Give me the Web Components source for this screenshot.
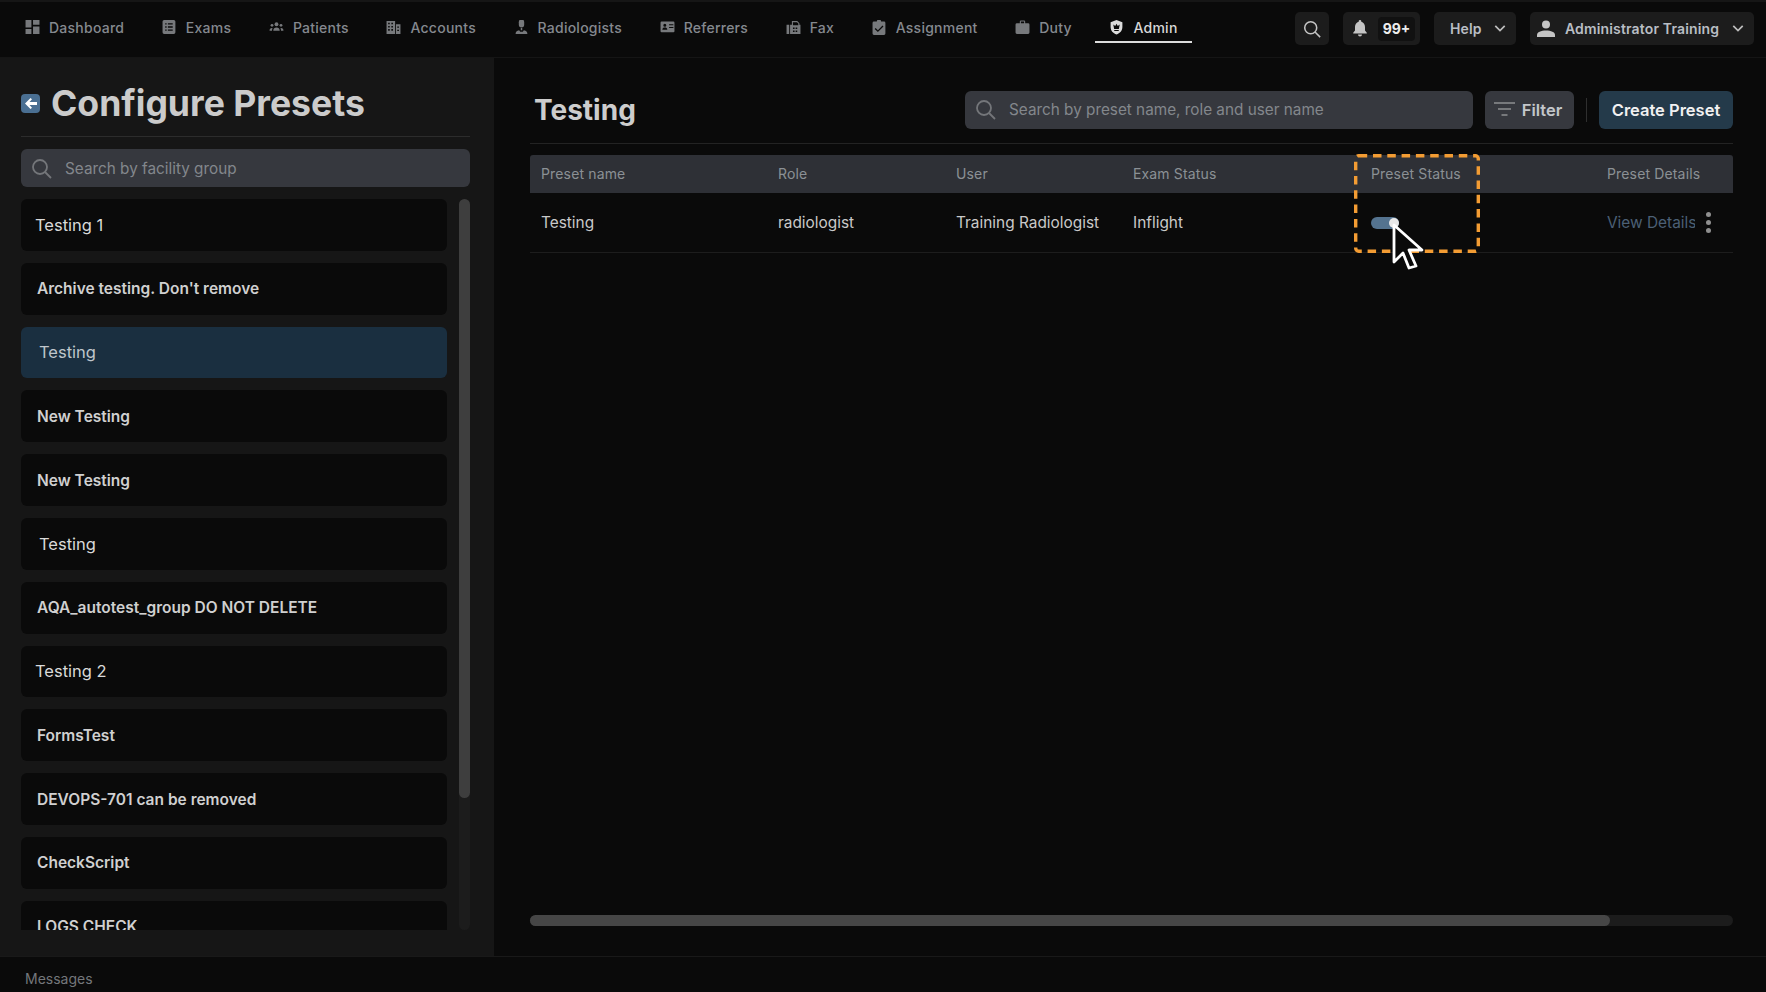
<!DOCTYPE html>
<html lang="en">
<head>
<meta charset="utf-8">
<title>Configure Presets</title>
<style>
  html, body { margin: 0; height: 100%; background: #0a0a0a; }
  body { font-family: Inter, "Liberation Sans", sans-serif; overflow: hidden; }
</style>
</head>
<body>
<app-shell></app-shell>
<script>
const ICONS = {
  dashboard: '<path d="M0 0h5.500v7H0zM7 0h6v4.500H7zM7 6h6v7H7zM0 8.500h5.500V13H0z"/>',
  exams: '<path fill-rule="evenodd" d="M1.500 0h9A1.500 1.500 0 0 1 12 1.500v10a1.500 1.500 0 0 1-1.500 1.500h-9A1.500 1.500 0 0 1 0 11.500v-10A1.500 1.500 0 0 1 1.500 0zM2.500 3v1.300h1.300V3zm2.500 0v1.300h4.500V3zM2.500 5.900v1.300h1.300V5.900zm2.500 0v1.300h4.500V5.900zM2.500 8.800v1.300h1.300V8.800zm2.500 0v1.300h4.500V8.800z"/>',
  patients: '<circle cx="6.500" cy="4" r="1.800"/><circle cx="2.300" cy="5" r="1.300"/><circle cx="10.700" cy="5" r="1.300"/><path d="M3.500 10c0-2 1.300-3 3-3s3 1 3 3zM0 10c0-1.500.8-2.500 2.200-2.500l.6.100C2.400 8.300 2.300 9.100 2.300 10zM13 10c0-1.500-.8-2.500-2.200-2.500l-.6.100c.4.700.5 1.500.5 2.400z"/>',
  accounts: '<path fill-rule="evenodd" d="M0 1h8v12H0zM1.500 2.500v1.500H3V2.500zm3 0v1.500H6V2.500zM1.500 5.500V7H3V5.500zm3 0V7H6V5.500zM1.500 8.500V10H3V8.500zm3 0V10H6V8.500zM8.800 4H13v9H8.800zm1.200 2v1.300h1.600V6zm0 3v1.300h1.600V9z"/>',
  radiologists: '<path d="M4 2a2.500 2.500 0 0 1 5 0v2.500a2.500 2.500 0 0 1-5 0z"/><path d="M5.800 7.500h1.400v2H5.800zM1 13c0-2 1-3.300 3.300-3.500l1 1.500h2.400l1-1.500C11 9.700 12 11 12 13z"/>',
  referrers: '<path fill-rule="evenodd" d="M1 1.500h11a1 1 0 0 1 1 1v8a1 1 0 0 1-1 1H1a1 1 0 0 1-1-1v-8a1 1 0 0 1 1-1zM4 3.500a1.400 1.400 0 1 0 0 2.800 1.400 1.400 0 0 0 0-2.800zM1.700 9h4.600c0-1.300-1-1.900-2.300-1.900S1.700 7.700 1.700 9zM8 4v1h4V4zm0 2.500v1h4v-1z"/>',
  fax: '<path fill-rule="evenodd" d="M0 4.500h2.500V13H0zM3.300 4.500H5V1h5l2 2v1.500h1V13H3.300zM6 2v3h5V3.300L9.700 2zM6 7v1.500h1.500V7zm2.500 0v1.500H10V7zM6 9.700v1.500h1.500V9.700zm2.500 0v1.500H10V9.700z"/>',
  assignment: '<path fill-rule="evenodd" d="M1.300 1.500H4a2 2 0 0 1 4 0h2.700A1.300 1.300 0 0 1 12 2.800v9.900a1.300 1.300 0 0 1-1.300 1.300H1.300A1.300 1.300 0 0 1 0 12.700V2.800A1.300 1.300 0 0 1 1.300 1.500zM9.300 5.200 5 9.500 2.900 7.400l-.9.900 3 3 5.200-5.200z"/>',
  duty: '<path d="M4 3V1.500A1 1 0 0 1 5 .5h3a1 1 0 0 1 1 1V3h2.700A1.300 1.300 0 0 1 13 4.300v7.400a1.300 1.300 0 0 1-1.300 1.300H1.300A1.300 1.300 0 0 1 0 11.700V4.300A1.300 1.300 0 0 1 1.300 3zm1-1.500V3h3V1.500z"/>',
  admin: '<path fill-rule="evenodd" d="M6.500 0 12 2v4.500c0 3.500-2.300 5.800-5.500 7C3.300 12.300 1 10 1 6.500V2zM3.500 4.200 4.300 8.500h4.400l.8-4.300-1.800 1.500L6.500 3.500 5.300 5.700zM4.400 9.300v1h4.200v-1z"/>',
  bell: '<path d="M8 0a1.300 1.300 0 0 1 1.300 1.300v.5C11.700 2.500 13 4.600 13 7v3.500l1.800 2.200v.8H1.200v-.8L3 10.500V7c0-2.400 1.300-4.500 3.700-5.200v-.5A1.300 1.300 0 0 1 8 0zM6 14.500h4a2 2 0 0 1-4 0z"/>',
  user: '<circle cx="9" cy="4.500" r="4"/><path d="M0 17v-2c0-3 4-4.500 9-4.500s9 1.500 9 4.500v2z"/>'
};

const CHEVRON = '<svg width="12" height="7" viewBox="0 0 14 8" fill="none" stroke="#bdbdbd" stroke-width="2"><path d="M1.500 1 7 6.500 12.500 1"/></svg>';
const LENS = (c, s = 21) => `<svg width="${s}" height="${s}" viewBox="0 0 21 21" fill="none" stroke="${c}" stroke-width="1.800"><circle cx="9" cy="9" r="7"/><path d="m14 14 6 6"/></svg>`;

class NavItem extends HTMLElement {
  connectedCallback() {
    const active = this.hasAttribute('active');
    this.attachShadow({ mode: 'open' }).innerHTML = `
      <style>
        :host { display: flex; align-items: center; gap: 9px; height: 100%; padding: 0 14px; box-sizing: border-box;
          font-size: 14px; font-weight: 500; letter-spacing: .25px; color: ${active ? '#d8d8d8' : '#85898f'};
          ${active ? 'box-shadow: inset 0 -2px 0 #dcdcdc;' : ''} }
        svg { width: 15px; height: 15px; fill: ${active ? '#dcdcdc' : '#77797c'}; flex: none; }
      </style>
      <svg viewBox="0 0 13 14">${ICONS[this.getAttribute('icon')]}</svg><slot></slot>`;
  }
}

class TopPill extends HTMLElement {
  connectedCallback() {
    this.attachShadow({ mode: 'open' }).innerHTML = `
      <style>
        :host { display: flex; align-items: center; height: 33px; border-radius: 5px; background: #1c1c1c; box-sizing: border-box;
          font-size: 14px; font-weight: 600; letter-spacing: .15px; color: #b9bec4; }
      </style><slot></slot>`;
  }
}

class TopNav extends HTMLElement {
  connectedCallback() {
    this.attachShadow({ mode: 'open' }).innerHTML = `
      <style>
        :host { display: flex; align-items: center; height: 58px; box-sizing: border-box; border-top: 2px solid #161616;
          border-bottom: 1px solid #151515; background: #0a0a0a; padding: 0 12px 0 11px; }
        nav { display: flex; height: 32px; gap: 9.600px; margin-right: auto; align-self: flex-start; margin-top: 9px; }
        .right { display: flex; gap: 14px; margin-top: -2px; }
        .search { width: 34px; justify-content: center; }
        .bell { width: 77px; padding-left: 9px; gap: 10px; }
        .bell svg { fill: #c4c4c4; flex: none; }
        .badge { display: flex; align-items: center; justify-content: center; width: 37px; height: 24px; border-radius: 4px;
          background: #111; color: #ececec; font-weight: 700; letter-spacing: 0; }
        .help { width: 82px; padding-left: 16px; gap: 12px; }
        .account { width: 224px; padding-left: 7px; }
        .account svg:first-child { fill: #c4c4c4; flex: none; margin-right: 10px; }
        .account svg:last-child { margin-left: 13px; }
      </style>
      <nav>
        <nav-item icon="dashboard">Dashboard</nav-item>
        <nav-item icon="exams">Exams</nav-item>
        <nav-item icon="patients">Patients</nav-item>
        <nav-item icon="accounts">Accounts</nav-item>
        <nav-item icon="radiologists">Radiologists</nav-item>
        <nav-item icon="referrers">Referrers</nav-item>
        <nav-item icon="fax">Fax</nav-item>
        <nav-item icon="assignment">Assignment</nav-item>
        <nav-item icon="duty">Duty</nav-item>
        <nav-item icon="admin" active>Admin</nav-item>
      </nav>
      <div class="right">
        <top-pill class="search">${LENS('#c4c4c4', 18)}</top-pill>
        <top-pill class="bell"><svg width="16" height="17" viewBox="0 0 16 17">${ICONS.bell}</svg><span class="badge">99+</span></top-pill>
        <top-pill class="help"><span>Help</span>${CHEVRON}</top-pill>
        <top-pill class="account"><svg width="18" height="17" viewBox="0 0 18 17">${ICONS.user}</svg><span>Administrator Training</span>${CHEVRON}</top-pill>
      </div>`;
  }
}

class SearchBox extends HTMLElement {
  connectedCallback() {
    this.attachShadow({ mode: 'open' }).innerHTML = `
      <style>
        :host { display: flex; align-items: center; gap: 13px; box-sizing: border-box; height: 38px; padding: 0 10px;
          border-radius: 6px; background: #36383e; font-size: 15.300px; color: #83878c; }
        svg { flex: none; }
      </style>
      ${LENS('#74767a')}<slot></slot>`;
  }
}

class GroupItem extends HTMLElement {
  connectedCallback() {
    const bold = this.hasAttribute('bold');
    const active = this.hasAttribute('active');
    const indent = this.getAttribute('indent') || 37;
    this.attachShadow({ mode: 'open' }).innerHTML = `
      <style>
        :host { display: flex; align-items: center; flex: none; box-sizing: border-box; height: 51.800px;
          padding-left: ${indent - 21}px; border-radius: 6px;
          background: ${active ? '#1a2f40' : '#0a0a0a'}; color: ${active ? '#bfc6cc' : bold ? '#d0d0d0' : '#dadada'};
          font-size: ${bold ? 15.500 : 16.500}px; font-weight: ${bold ? 600 : 400}; }
      </style><slot></slot>`;
  }
}

class SideBar extends HTMLElement {
  connectedCallback() {
    this.attachShadow({ mode: 'open' }).innerHTML = `
      <style>
        :host { display: flex; flex-direction: column; flex: none; width: 494px; box-sizing: border-box; padding: 0 24px 0 21px;
          background: #161616; overflow: hidden; }
        header { display: flex; align-items: center; gap: 11px; height: 79px; padding-top: 13px; box-sizing: border-box; flex: none; border-bottom: 1px solid #2c2c2c; }
        .back { display: flex; align-items: center; justify-content: center; width: 19px; height: 19px; border-radius: 4px; background: #4a6f92; }
        h1 { margin: 0; font-size: 35.600px; font-weight: 700; color: #cbcbcb; }
        search-box { margin-top: 12px; flex: none; }
        .body { display: flex; gap: 12px; height: 731px; margin-top: 12px; flex: none; }
        .list { display: flex; flex-direction: column; gap: 12px; flex: 1; overflow: hidden; }
        .track { flex: none; width: 11px; border-radius: 6px; background: #1c1c1c; }
        .thumb { height: 599px; border-radius: 6px; background: #3e3e3e; }
      </style>
      <header>
        <span class="back"><svg width="12" height="11" viewBox="0 0 12 11" fill="#fff"><path d="M5.500 0 7 1.300 4.500 4H12v3H4.500L7 9.700 5.500 11 0 5.500z"/></svg></span>
        <h1>Configure Presets</h1>
      </header>
      <search-box>Search by facility group</search-box>
      <div class="body">
        <div class="list">
          <group-item indent="35">Testing 1</group-item>
          <group-item bold>Archive testing. Don't remove</group-item>
          <group-item active indent="39">Testing</group-item>
          <group-item bold>New Testing</group-item>
          <group-item bold>New Testing</group-item>
          <group-item indent="39">Testing</group-item>
          <group-item bold>AQA_autotest_group DO NOT DELETE</group-item>
          <group-item indent="35">Testing 2</group-item>
          <group-item bold>FormsTest</group-item>
          <group-item bold>DEVOPS-701 can be removed</group-item>
          <group-item bold>CheckScript</group-item>
          <group-item bold>LOGS CHECK</group-item>
        </div>
        <div class="track"><div class="thumb"></div></div>
      </div>`;
  }
}

class PresetTable extends HTMLElement {
  connectedCallback() {
    const cols = 'grid-template-columns: 237px 178px 177px 238px 236px 1fr;';
    this.attachShadow({ mode: 'open' }).innerHTML = `
      <style>
        :host { display: block; position: relative; margin-top: 11px; font-size: 14px; }
        .row { display: grid; ${cols} align-items: center; padding-left: 11px; }
        .head { height: 38px; padding-bottom: 1px; box-sizing: border-box; background: #2e3036; border-radius: 3px 3px 0 0; color: #8b9095; letter-spacing: .15px; }
        .cell { height: 60px; border-bottom: 1px solid #1d1d1d; box-sizing: border-box; font-size: 15.400px; color: #c9c9c9; }
        .toggle { display: block; position: relative; width: 28px; height: 12px; border-radius: 6px; background: #54738f; }
        .toggle::after { content: ""; position: absolute; right: 0; top: 1px; width: 10px; height: 10px; border-radius: 50%; background: #e8e8e8; }
        .details { display: flex; align-items: center; }
        .link { width: 88px; overflow: hidden; white-space: nowrap; color: #4c6076; }
        .dots { display: flex; flex-direction: column; gap: 3px; margin-left: 11px; }
        .dots i { width: 5px; height: 5px; border-radius: 50%; background: #8f8f8f; }
        .mark { position: absolute; left: 824px; top: -1px; }
        .cursor { position: absolute; left: 861px; top: 67px; }
      </style>
      <div class="row head"><span>Preset name</span><span>Role</span><span>User</span><span>Exam Status</span><span>Preset Status</span><span>Preset Details</span></div>
      <div class="row cell">
        <span>Testing</span><span>radiologist</span><span>Training Radiologist</span><span>Inflight</span>
        <span><i class="toggle"></i></span>
        <span class="details"><span class="link">View Details</span><span class="dots"><i></i><i></i><i></i></span></span>
      </div>
      <svg class="mark" width="126" height="99" fill="none"><rect x="1.700" y="1.700" width="122.600" height="95.600" rx="3" stroke="#f39c33" stroke-width="3.400" stroke-dasharray="8.500 5.800"/></svg>
      <svg class="cursor" width="36" height="50" viewBox="-3 -3 36 50"><path d="M0 0v37l9-9 6 15 7-2-7-16h13z" fill="#0a0a0a" stroke="#fff" stroke-width="2.800" stroke-linejoin="round"/></svg>`;
  }
}

class MainPanel extends HTMLElement {
  connectedCallback() {
    this.attachShadow({ mode: 'open' }).innerHTML = `
      <style>
        :host { display: flex; flex-direction: column; flex: 1; min-width: 0; box-sizing: border-box; padding: 0 33px 0 36px; }
        header { display: flex; align-items: center; height: 86px; padding-top: 18px; box-sizing: border-box; flex: none; border-bottom: 1px solid #232323; }
        h2 { margin: 0 0 0 4px; font-size: 28px; font-weight: 700; color: #cdcdcd; }
        search-box { width: 508px; margin-left: auto; }
        .btn { display: flex; align-items: center; justify-content: center; height: 38px; border-radius: 6px; font-size: 16.500px; font-weight: 600; box-sizing: border-box; }
        .filter { width: 89px; margin-left: 12px; gap: 7px; padding-right: 3px; background: #36383e; color: #c3c6ca; }
        .sep { width: 1px; height: 24px; margin: 0 12px; background: #2f2f2f; }
        .create { width: 134px; background: #243a4a; color: #f1f1f1; }
        preset-table { flex: none; }
        .hbar { height: 11px; flex: none; margin-top: auto; margin-bottom: 30px; border-radius: 6px; background: #1c1c1c; }
        .hbar div { width: 1080px; height: 100%; border-radius: 6px; background: #464646; }
      </style>
      <header>
        <h2>Testing</h2>
        <search-box>Search by preset name, role and user name</search-box>
        <span class="btn filter"><svg width="21" height="15" viewBox="0 0 21 15" fill="#77797c"><path d="M0 0h21v2H0zM4 6h13v2H4zM7.500 12h6v2h-6z"/></svg>Filter</span>
        <span class="sep"></span>
        <span class="btn create">Create Preset</span>
      </header>
      <preset-table></preset-table>
      <div class="hbar"><div></div></div>`;
  }
}

class AppShell extends HTMLElement {
  connectedCallback() {
    this.attachShadow({ mode: 'open' }).innerHTML = `
      <style>
        :host { display: flex; flex-direction: column; height: 992px; background: #0a0a0a; }
        .content { display: flex; flex: 1; min-height: 0; }
        footer { display: flex; align-items: center; flex: none; height: 36px; box-sizing: border-box; padding: 7px 0 0 25px;
          border-top: 1px solid #191919; font-size: 14px; color: #74777b; }
      </style>
      <top-nav></top-nav>
      <div class="content"><side-bar></side-bar><main-panel></main-panel></div>
      <footer>Messages</footer>`;
  }
}

customElements.define('nav-item', NavItem);
customElements.define('top-pill', TopPill);
customElements.define('top-nav', TopNav);
customElements.define('search-box', SearchBox);
customElements.define('group-item', GroupItem);
customElements.define('side-bar', SideBar);
customElements.define('preset-table', PresetTable);
customElements.define('main-panel', MainPanel);
customElements.define('app-shell', AppShell);
</script>
</body>
</html>
